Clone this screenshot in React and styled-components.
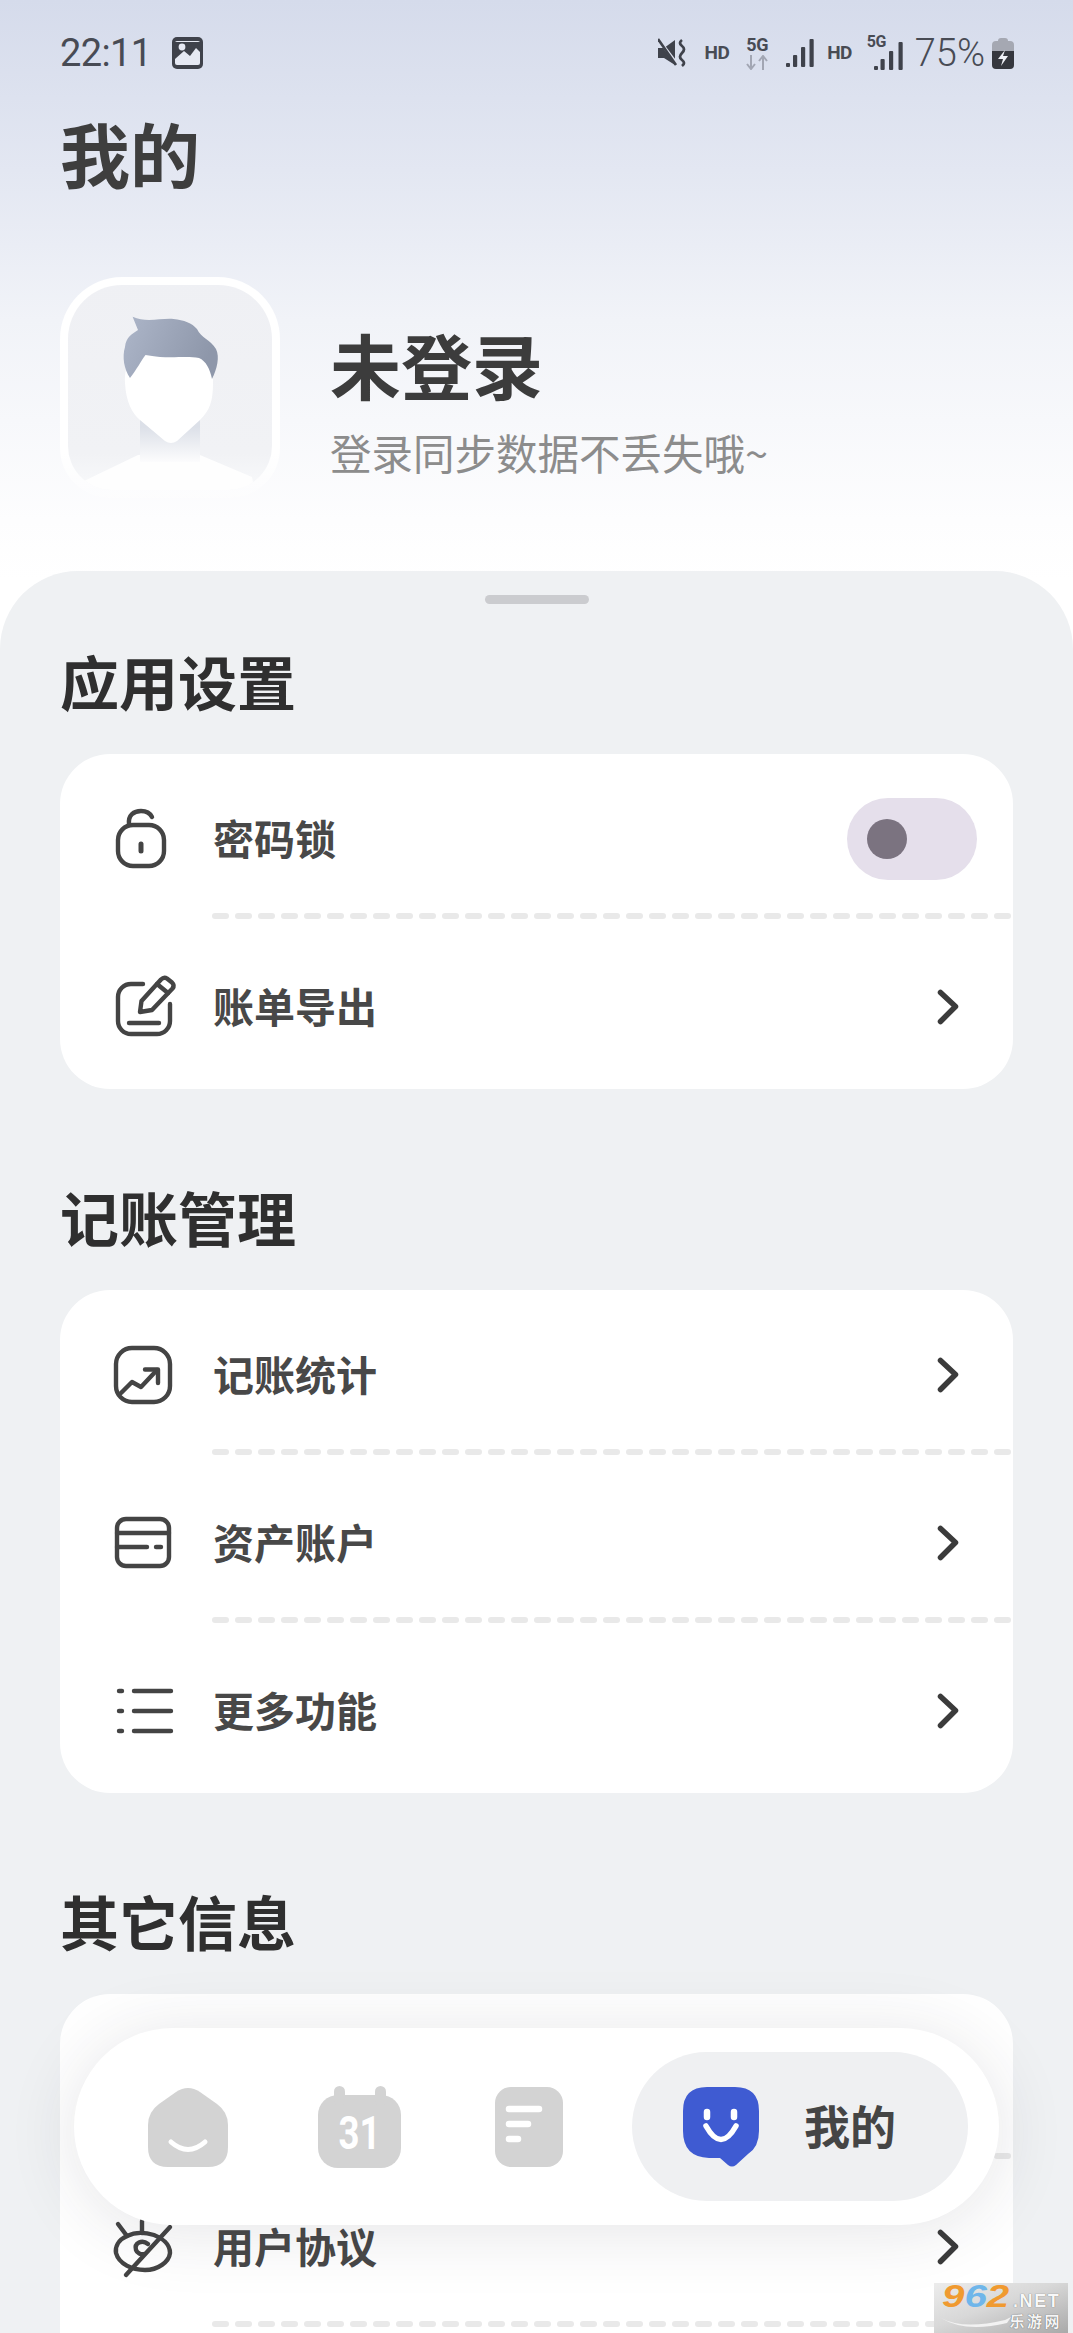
import styled, { createGlobalStyle } from 'styled-components';

const GlobalStyle = createGlobalStyle`
  html, body { margin: 0; padding: 0; background: #fff; }
  body { font-family: Roboto, "Noto Sans CJK SC", sans-serif; }
`;

const CJK = `"Noto Sans CJK SC", "Noto Sans", sans-serif`;

const Screen = styled.div`
  position: relative;
  width: 1073px;
  height: 2333px;
  overflow: hidden;
  background: linear-gradient(180deg, #d5dbeb 0, #e3e7f2 170px, #f1f3f8 320px, #fdfdfe 520px, #fff 580px);
`;

// --- barre de statut
const StatusBar = styled.div`
  display: flex;
  align-items: center;
  height: 36px;
  padding: 35px 59px 0 60px;
  color: #484b54;
`;

const Clock = styled.span`
  font-size: 38px;
  font-weight: 400;
  letter-spacing: -0.6px;
  line-height: 36px;
`;

const StatusLeftIcon = styled.svg`
  margin-left: 20px;
  display: block;
`;

const StatusRight = styled.div`
  margin-left: auto;
  display: flex;
  align-items: center;
`;

const StatusItem = styled.span`
  margin-left: ${(p) => p.$gap || 0}px;
  display: flex;
  align-items: center;
`;

const HdText = styled.span`
  font-size: 19px;
  font-weight: 700;
  line-height: 20px;
  white-space: nowrap;
  letter-spacing: -0.6px;
`;

const NetStack = styled.span`
  display: flex;
  flex-direction: column;
  align-items: center;
  gap: 2px;
`;

const NetLabel = styled.span`
  font-size: 18px;
  font-weight: 700;
  line-height: 17px;
  letter-spacing: -0.3px;
`;

const SignalBadge = styled.span`
  position: relative;
  display: block;
  width: 37px;
  height: 34px;
`;

const SmallNet = styled.span`
  position: absolute;
  left: 0;
  top: -3px;
  font-size: 16px;
  font-weight: 700;
  line-height: 18px;
  letter-spacing: -0.5px;
`;

const Percent = styled.span`
  font-size: 38px;
  font-weight: 300;
  line-height: 36px;
  white-space: nowrap;
`;

const Title = styled.h1`
  margin: 42px 0 0 60px;
  font-family: ${CJK};
  font-size: 70px;
  font-weight: 700;
  line-height: 80px;
  color: #3e3e3e;
`;

const Profile = styled.div`
  display: flex;
  gap: 50px;
  margin: 84px 0 0 60px;
`;

const AvatarFrame = styled.div`
  box-sizing: border-box;
  width: 220px;
  height: 221px;
  padding: 8px;
  border-radius: 62px 62px 50px 50px;
  background: linear-gradient(180deg, #fff 0, #fff 80%, rgba(255, 255, 255, 0.2) 100%);
`;

const AvatarInner = styled.svg`
  display: block;
  border-radius: 54px 54px 44px 44px;
`;

const ProfileText = styled.div`
  display: flex;
  flex-direction: column;
  margin-top: 44px;
  font-family: ${CJK};
`;

const UserName = styled.div`
  font-size: 71px;
  font-weight: 700;
  line-height: 84px;
  color: #3c3c3c;
`;

const UserHint = styled.div`
  font-size: 41.5px;
  font-weight: 400;
  line-height: 56px;
  color: #8c8c8c;
  margin-top: 19px;
`;

// --- feuille grise
const Sheet = styled.div`
  margin-top: 73px;
  padding: 24px 60px 0;
  border-radius: 78px 78px 0 0;
  background: #eff1f3;
  height: 1800px;
`;

const Handle = styled.div`
  width: 104px;
  height: 9px;
  margin: 0 auto 37px;
  border-radius: 5px;
  background: #cbcccf;
`;

const SectionTitle = styled.h2`
  margin: ${(p) => (p.$first ? 0 : 88)}px 0 33px 0;
  font-family: ${CJK};
  font-size: 59px;
  font-weight: 700;
  line-height: 80px;
  color: #2f2f2f;
`;

const Card = styled.div`
  background: #fff;
  border-radius: 50px;
  padding-bottom: 8px;
`;

const Row = styled.div`
  box-sizing: border-box;
  display: flex;
  align-items: center;
  height: 162px;
  padding: 14px 36px 0 50px;

  &:first-child {
    height: 159px;
    padding-top: 11px;
  }
`;

const RowIcon = styled.svg`
  display: block;
  flex: none;
  overflow: visible;
  stroke: #444;
  stroke-width: 4.4;
  stroke-linecap: round;
  stroke-linejoin: round;
  fill: none;
`;

const RowLabel = styled.span`
  margin: -5px 0 0 43px;
  font-family: ${CJK};
  font-size: 41px;
  font-weight: 700;
  color: #484848;
`;

const Chevron = styled.svg`
  display: block;
  margin-left: auto;
  margin-right: 18px;
  fill: none;
  stroke: #3b3b3b;
  stroke-width: 5.5;
  stroke-linecap: round;
  stroke-linejoin: round;
`;

const Toggle = styled.div`
  box-sizing: border-box;
  margin-left: auto;
  width: 130px;
  height: 82px;
  padding: 21px 20px;
  border-radius: 41px;
  background: #e5dfeb;
`;

const Knob = styled.div`
  width: 40px;
  height: 40px;
  border-radius: 50%;
  background: #7b7380;
`;

const Divider = styled.div`
  display: flex;
  gap: 6px;
  height: 6px;
  margin-left: 152px;
  overflow: hidden;
`;

const Dash = styled.span`
  flex: none;
  width: 17px;
  height: 6px;
  border-radius: 3px;
  background: #e9e9e9;
`;

// --- barre de navigation flottante
const NavBar = styled.div`
  position: absolute;
  left: 74px;
  top: 2028px;
  box-sizing: border-box;
  width: 925px;
  height: 197px;
  display: flex;
  align-items: center;
  padding: 0 31px 0 74px;
  border-radius: 99px;
  background: #fff;
  box-shadow: 0 6px 70px rgba(40, 45, 60, 0.12);
`;

const NavIcons = styled.div`
  display: flex;
  align-items: center;
  gap: 90px;
`;

const NavIcon = styled.svg`
  display: block;
  flex: none;
  margin-left: ${(p) => p.$shift || 0}px;
`;

const NavActive = styled.div`
  flex: none;
  margin-left: auto;
  box-sizing: border-box;
  width: 336px;
  height: 149px;
  display: flex;
  align-items: center;
  gap: 45px;
  padding-left: 51px;
  border-radius: 75px;
  background: #eff0f2;
`;

const NavLabel = styled.span`
  margin-top: -5px;
  font-family: ${CJK};
  font-size: 46px;
  font-weight: 700;
  color: #454545;
`;

// --- filigrane
const Watermark = styled.div`
  position: absolute;
  right: 5px;
  bottom: 0;
  width: 134px;
  height: 50px;
  background: linear-gradient(160deg, #ececec 0, #d8d8d8 45%, #a9a9a9 100%);
`;

const MarkTop = styled.div`
  display: flex;
  align-items: baseline;
  height: 28px;
  font-family: "Liberation Sans", sans-serif;
  font-weight: 700;
  line-height: 28px;
`;

const MarkDigits = styled.span`
  flex: none;
  display: inline-block;
  width: 71px;
  margin-left: 8px;
  transform: scaleX(1.3);
  transform-origin: left center;
  white-space: nowrap;
`;

const MarkNum = styled.span`
  font-size: 31px;
  font-style: italic;
  color: ${(p) => p.$color};
`;

const MarkNet = styled.span`
  font-size: 18px;
  letter-spacing: 1.6px;
  color: #f8f8f8;
  text-shadow: 0 0 1px #555;
`;

const MarkCn = styled.div`
  padding-right: 6px;
  text-align: right;
  font-family: ${CJK};
  font-size: 15px;
  font-weight: 700;
  line-height: 20px;
  letter-spacing: 2.5px;
  color: #f5f5f5;
  text-shadow: 0 0 1px #444;
`;

const MarkSwoosh = styled.svg`
  position: absolute;
  left: 7px;
  bottom: 3px;
`;

const DashedLine = () => (
  <Divider>
    {Array.from({ length: 36 }).map((_, i) => (
      <Dash key={i} />
    ))}
  </Divider>
);

const ChevronRight = () => (
  <Chevron width="22" height="36" viewBox="0 0 22 36">
    <path d="M3.5 3.5 L18.5 17.5 L3.5 32.5" />
  </Chevron>
);

const LockIcon = () => (
  <RowIcon width="60" height="60" viewBox="0 0 60 60">
    <rect x="8" y="16" width="46" height="41" rx="15" />
    <path d="M19 15 C18 6 24 2 31 2 C36 2 40 4 42 8" />
    <path d="M31 35 V42" strokeWidth="5" />
  </RowIcon>
);

const PenIcon = () => (
  <RowIcon width="60" height="60" viewBox="0 0 60 60">
    <path d="M33 7 H21 a13 13 0 0 0 -13 13 V44 a13 13 0 0 0 13 13 H47 a13 13 0 0 0 13 -13 V27" />
    <path d="M19 46 H49" />
    <path d="M30 35 L31.5 24 L51 2.5 Q54 -0.5 57 1.5 L62 5.5 Q65 8.5 62.5 11.5 L42 33 Z" />
    <path d="M47 7 L58 16" />
  </RowIcon>
);

const ChartIcon = () => (
  <RowIcon width="60" height="60" viewBox="0 0 60 60">
    <rect x="6" y="3" width="54" height="54" rx="16" />
    <path d="M11 48 L22 37 L31 42 L47 25" />
    <path d="M35 24.5 H48 V38" />
  </RowIcon>
);

const WalletIcon = () => (
  <RowIcon width="60" height="60" viewBox="0 0 60 60">
    <rect x="7" y="6" width="52" height="47" rx="9" />
    <path d="M7 20 H59" />
    <path d="M7 34 H37" />
    <path d="M46 34 H51" />
  </RowIcon>
);

const ListIcon = () => (
  <RowIcon width="60" height="60" viewBox="0 0 60 60" strokeWidth="4.5">
    <path d="M9 10 H12 M24 10 H61" />
    <path d="M9 30 H12 M24 30 H61" />
    <path d="M9 50 H12 M24 50 H61" />
  </RowIcon>
);

const EyeOffIcon = () => (
  <RowIcon width="60" height="60" viewBox="0 0 60 60">
    <path d="M17 19 C8 23 5 30 6 36 C9 47 22 53 35 53 C48 53 59 45 60 36 C60 27 52 21 44 18 C34 15 25 15 17 19 Z" />
    <path d="M8 7 L17 19" />
    <path d="M32 4 V16" />
    <path d="M38 27 C32 22 24 26 26 33 C27 36 31 38 34 37" />
    <path d="M16 58 L60 10" />
  </RowIcon>
);

const AvatarArt = () => (
  <AvatarInner width="204" height="205" viewBox="8 8 204 205">
    <defs>
      <linearGradient id="avBg" x1="0" y1="0" x2="0" y2="1">
        <stop offset="0" stopColor="#eff0f4" />
        <stop offset="0.8" stopColor="#f1f2f5" />
        <stop offset="1" stopColor="#fafbfc" />
      </linearGradient>
      <linearGradient id="avHair" x1="0" y1="0" x2="1" y2="0.3">
        <stop offset="0" stopColor="#adb6c9" />
        <stop offset="1" stopColor="#8e97aa" />
      </linearGradient>
      <linearGradient id="avNeck" x1="0" y1="0" x2="0" y2="1">
        <stop offset="0.3" stopColor="#dce0e8" />
        <stop offset="1" stopColor="#fcfcfd" />
      </linearGradient>
    </defs>
    <rect x="0" y="0" width="222" height="221" fill="url(#avBg)" />
    <path d="M24 204 L78 178 H140 L192 200 L196 221 H24 Z" fill="#fefefe" />
    <rect x="80" y="135" width="60" height="50" fill="url(#avNeck)" />
    <path d="M65 106 C64 88 72 72 90 70 H130 C146 72 154 90 153 106 C153 124 150 133 140 143 L117 164 Q111 168 105 164 L80 143 C72 136 66 125 65 106 Z" fill="#fff" />
    <path d="M72.6 39.7 C86 46 100 41 113.5 42 C124 43 132 46 137 52 C141 61 150 62 156 72 C160 80 157 92 152 102 C150 92 146 84 139 81 C128 79 116 81 100 80 C94 79 90 79 85.5 78 C81 84 77 92 70 101 C64 92 62 80 65 70 C66 60 72 57 78 53 Z" fill="url(#avHair)" />
  </AvatarInner>
);

export default function App() {
  return (
    <Screen>
      <GlobalStyle />
      <StatusBar>
        <Clock>22:11</Clock>
        <StatusLeftIcon width="31" height="32" viewBox="0 0 31 32">
          <rect x="0" y="0" width="31" height="32" rx="5" fill="#3f424b" />
          <rect x="3" y="4" width="25" height="24" rx="2" fill="#e6e9f3" />
          <path d="M3 5 H28 V15 L24 11 L18 19 L12 14 L3 22 Z" fill="#3f424b" />
          <circle cx="10" cy="10" r="3.4" fill="#e6e9f3" />
        </StatusLeftIcon>
        <StatusRight>
          <StatusItem>
            <svg width="29" height="30" viewBox="0 0 29 30">
              <path d="M0 10 H6 L17 2 V27 L6 20 H0 Z" fill="#3f424b" />
              <path d="M1 2 L19 26" stroke="#dde1ee" strokeWidth="3" />
              <path d="M0 1 L18 27" stroke="#3f424b" strokeWidth="2.6" />
              <path d="M24 2 Q20 5 24 8 Q28 11 24 15 Q20 19 24 22 Q28 25 24 28" fill="none" stroke="#3f424b" strokeWidth="2.8" />
            </svg>
          </StatusItem>
          <StatusItem $gap={18}>
            <HdText>HD</HdText>
          </StatusItem>
          <StatusItem $gap={16}>
            <NetStack>
              <NetLabel>5G</NetLabel>
              <svg width="24" height="15" viewBox="0 0 24 15">
                <path d="M6 0 V14 M2 9 L6 14 L10 9" fill="none" stroke="#a2a6b3" strokeWidth="2" />
                <path d="M18 15 V1 M14 6 L18 1 L22 6" fill="none" stroke="#a2a6b3" strokeWidth="2" />
              </svg>
            </NetStack>
          </StatusItem>
          <StatusItem $gap={17}>
            <svg width="28" height="28" viewBox="0 0 28 28" fill="#3f424b">
              <rect x="0" y="24" width="4" height="4" rx="1" />
              <rect x="7" y="16" width="4.2" height="12" rx="1" />
              <rect x="15" y="8" width="4.2" height="20" rx="1" />
              <rect x="23.5" y="0" width="4.2" height="28" rx="1" />
            </svg>
          </StatusItem>
          <StatusItem $gap={13}>
            <HdText>HD</HdText>
          </StatusItem>
          <StatusItem $gap={15}>
            <SignalBadge>
              <SmallNet>5G</SmallNet>
              <svg width="37" height="34" viewBox="0 0 37 34" fill="#3f424b">
                <rect x="7" y="30" width="4" height="4" rx="1" />
                <rect x="13.5" y="23" width="4.2" height="11" rx="1" />
                <rect x="22" y="15" width="4.2" height="19" rx="1" />
                <rect x="31.5" y="6" width="4.2" height="28" rx="1" />
              </svg>
            </SignalBadge>
          </StatusItem>
          <StatusItem $gap={11}>
            <Percent>75%</Percent>
          </StatusItem>
          <StatusItem $gap={7}>
            <svg width="22" height="31" viewBox="0 0 22 31">
              <path d="M6 3 Q6 0 9 0 H13 Q16 0 16 3 H18 Q22 3 22 7 V14 H0 V7 Q0 3 4 3 Z" fill="#a5a8b2" />
              <path d="M0 13 H22 V27 Q22 31 18 31 H4 Q0 31 0 27 Z" fill="#35373e" />
              <path d="M13 12 L6 21 H11 L9 28 L16 18 H11 Z" fill="#eef0f6" />
            </svg>
          </StatusItem>
        </StatusRight>
      </StatusBar>

      <Title>我的</Title>

      <Profile>
        <AvatarFrame>
          <AvatarArt />
        </AvatarFrame>
        <ProfileText>
          <UserName>未登录</UserName>
          <UserHint>登录同步数据不丢失哦~</UserHint>
        </ProfileText>
      </Profile>

      <Sheet>
        <Handle />
        <SectionTitle $first>应用设置</SectionTitle>
        <Card>
          <Row>
            <LockIcon />
            <RowLabel>密码锁</RowLabel>
            <Toggle>
              <Knob />
            </Toggle>
          </Row>
          <DashedLine />
          <Row>
            <PenIcon />
            <RowLabel>账单导出</RowLabel>
            <ChevronRight />
          </Row>
        </Card>

        <SectionTitle>记账管理</SectionTitle>
        <Card>
          <Row>
            <ChartIcon />
            <RowLabel>记账统计</RowLabel>
            <ChevronRight />
          </Row>
          <DashedLine />
          <Row>
            <WalletIcon />
            <RowLabel>资产账户</RowLabel>
            <ChevronRight />
          </Row>
          <DashedLine />
          <Row>
            <ListIcon />
            <RowLabel>更多功能</RowLabel>
            <ChevronRight />
          </Row>
        </Card>

        <SectionTitle>其它信息</SectionTitle>
        <Card>
          <Row />
          <DashedLine />
          <Row>
            <EyeOffIcon />
            <RowLabel>用户协议</RowLabel>
            <ChevronRight />
          </Row>
          <DashedLine />
          <Row />
        </Card>
      </Sheet>

      <NavBar>
        <NavIcons>
          <NavIcon width="80" height="80" viewBox="0 0 80 80">
            <path d="M28 5 Q40 -3 52 5 L69 17 Q80 25 80 38 V60 Q80 80 60 80 H20 Q0 80 0 60 V38 Q0 25 11 17 Z" fill="#d3d3d3" />
            <path d="M23 55 Q40 70 57 55" fill="none" stroke="#fff" strokeWidth="5" strokeLinecap="round" />
          </NavIcon>
          <NavIcon width="83" height="82" viewBox="0 0 83 82">
            <rect x="0" y="9" width="83" height="73" rx="20" fill="#d3d3d3" />
            <rect x="16" y="0" width="11" height="20" rx="5.5" fill="#d3d3d3" />
            <rect x="57" y="0" width="11" height="20" rx="5.5" fill="#d3d3d3" />
            <text x="20.5" y="63" fontFamily="Roboto, sans-serif" fontWeight="700" fontSize="47" textLength="42" lengthAdjust="spacingAndGlyphs" fill="#fff">31</text>
          </NavIcon>
          <NavIcon width="68" height="80" viewBox="0 0 68 80" $shift={4}>
            <rect x="0" y="0" width="68" height="80" rx="16" fill="#d3d3d3" />
            <path d="M14 22 H44 M14 37 H33 M14 52 H23" fill="none" stroke="#fff" strokeWidth="6.5" strokeLinecap="round" />
          </NavIcon>
        </NavIcons>
        <NavActive>
          <NavIcon width="76" height="80" viewBox="0 0 76 80">
            <path d="M24 0 H52 Q76 0 76 24 V44 Q76 60 65 67 L53 78 Q49 81 45 78 L37 71 H26 Q0 70 0 44 V24 Q0 0 24 0 Z" fill="#3f5bd2" />
            <path d="M24 25 V30 M51 25 V30" fill="none" stroke="#fff" strokeWidth="6.5" strokeLinecap="round" />
            <path d="M23 39 Q38 66 53 39" fill="none" stroke="#fff" strokeWidth="5.5" strokeLinecap="round" />
          </NavIcon>
          <NavLabel>我的</NavLabel>
        </NavActive>
      </NavBar>

      <Watermark>
        <MarkTop>
          <MarkDigits>
            <MarkNum $color="#f09a30">9</MarkNum>
            <MarkNum $color="#6fb6ea">6</MarkNum>
            <MarkNum $color="#f09a30">2</MarkNum>
          </MarkDigits>
          <MarkNet>.NET</MarkNet>
        </MarkTop>
        <MarkCn>乐游网</MarkCn>
        <MarkSwoosh width="70" height="14" viewBox="0 0 70 14">
          <path d="M0 2 Q22 14 64 4 L70 1 L66 7 Q24 17 0 2 Z" fill="#f2f2f2" />
        </MarkSwoosh>
      </Watermark>
    </Screen>
  );
}
